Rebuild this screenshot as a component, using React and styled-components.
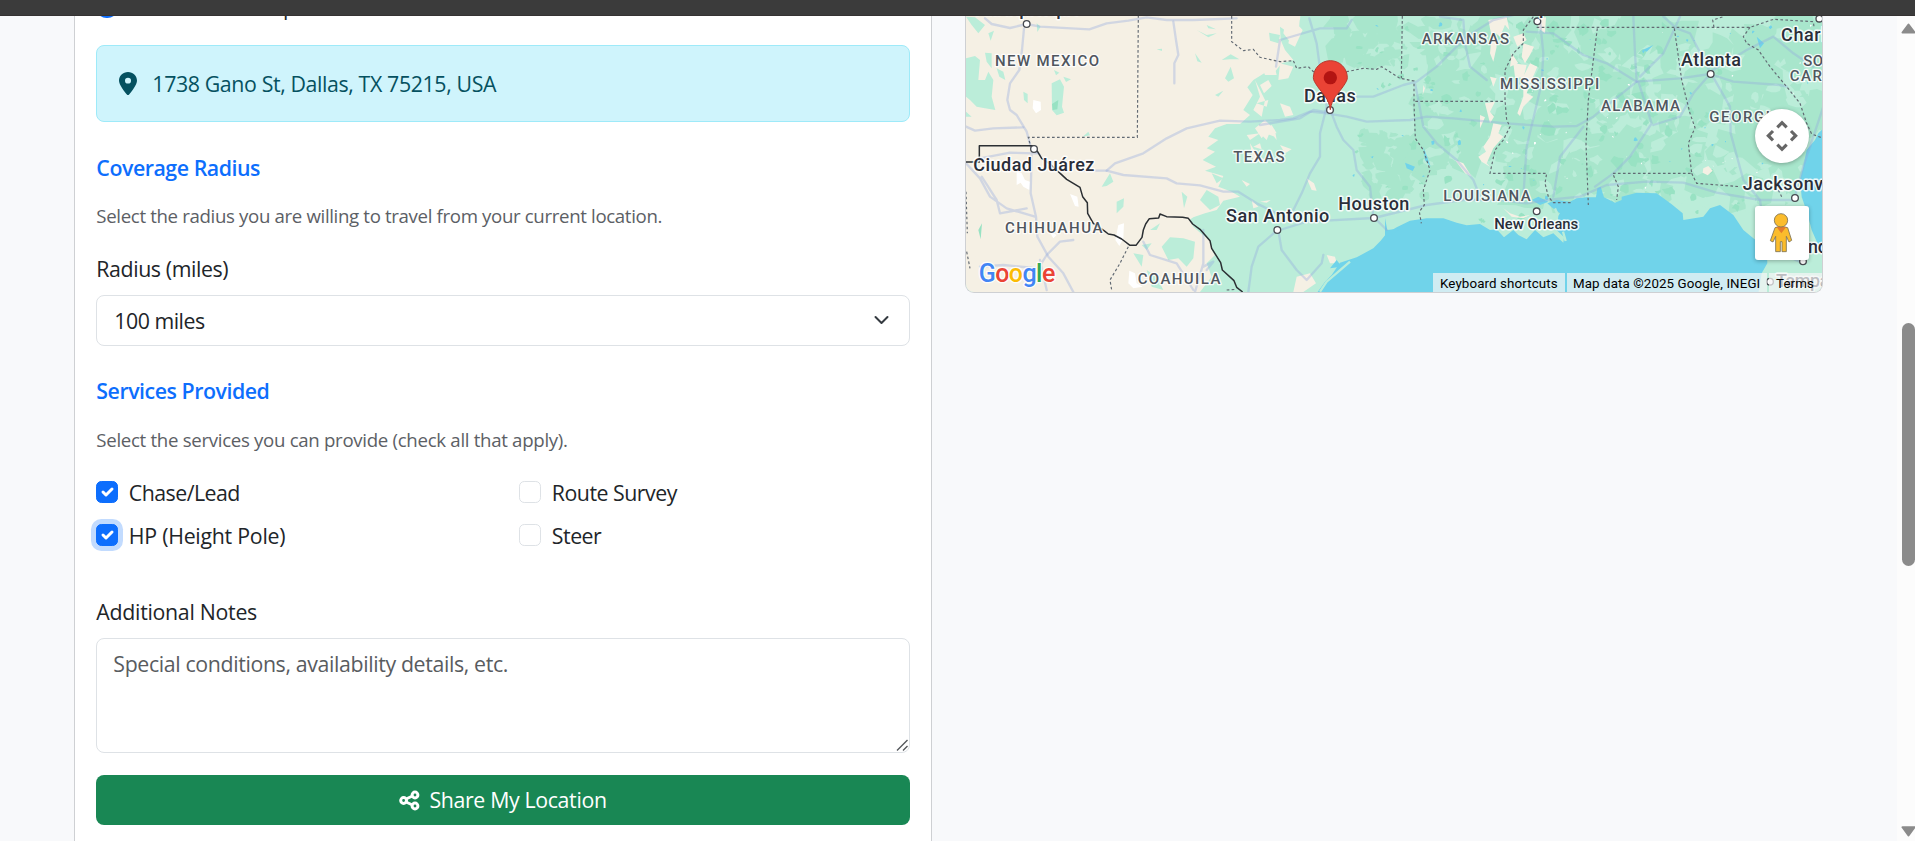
import React from 'react';
import styled, { createGlobalStyle, css } from 'styled-components';

const GlobalStyle = createGlobalStyle`
  *, *::before, *::after { box-sizing: border-box; }
  html, body, #root { height: 100%; }
  body {
    margin: 0;
    overflow: hidden;
    background: #f8f9fb;
    color: #212529;
    font-family: "Open Sans", "Noto Sans", sans-serif;
    font-size: 21.33px;
    line-height: 32px;
  }
`;

const tracking = css`
  letter-spacing: ${(p) => p.$track ?? -0.35}px;
  white-space: nowrap;
`;

const Shell = styled.div`
  display: flex;
  flex-direction: column;
  height: 100vh;
`;

const TopBar = styled.div`
  flex: none;
  height: 16px;
  background: #3b3b3b;
  border-bottom: 1px solid #353232;
`;

const Viewport = styled.div`
  flex: 1;
  min-height: 0;
  display: flex;
  overflow: hidden;
`;

const Content = styled.main`
  flex: 1;
  min-width: 0;
  display: flex;
  align-items: flex-start;
  gap: 33px;
  padding-left: 74px;
`;

const FormCard = styled.form`
  width: 858px;
  height: 900px;
  margin-top: -24px;
  padding: 0 21.33px;
  background: #fff;
  border: 1px solid #ced0d3;
  border-top: 0;
  display: flex;
  flex-direction: column;
`;

const OptionRow = styled.label`
  display: flex;
  align-items: flex-start;
  gap: 10.5px;
  height: 32px;
`;

const OptionText = styled.span`
  padding-top: 1px;
  ${tracking}
`;

const RadioText = styled.span`
  height: 32px;
  line-height: 30px;
  ${tracking}
`;

const Radio = styled.span`
  width: 21.33px;
  height: 21.33px;
  margin-top: 4.6px;
  border-radius: 50%;
  background: #0d6efd;
`;

const Alert = styled.div`
  display: flex;
  align-items: center;
  gap: 15px;
  height: 77px;
  margin-top: 21px;
  padding: 0 22px;
  color: #055160;
  background: #cff4fc;
  border: 1px solid #9eeaf9;
  border-radius: 8px;
  svg { width: 18px; height: 23px; }
`;

const AlertText = styled.span`
  ${tracking}
`;

const SectionTitle = styled.h6`
  margin: 32px 0 0;
  padding-top: ${(p) => p.$drop ?? 0}px;
  font-size: 21.33px;
  font-weight: 600;
  line-height: 25.6px;
  color: #0d6efd;
  ${tracking}
`;

const Hint = styled.p`
  margin: ${(p) => p.$top ?? 22}px 0 0;
  height: 28px;
  font-size: 18.67px;
  line-height: 28px;
  color: #5c6065;
  ${tracking}
`;

const FieldLabel = styled.label`
  margin-top: ${(p) => p.$top}px;
  height: 32px;
  ${tracking}
`;

const Select = styled.div`
  display: flex;
  align-items: center;
  justify-content: space-between;
  height: 51px;
  margin-top: 10.4px;
  padding: 0 17px;
  border: 1px solid #dee2e6;
  border-radius: 8px;
  svg { width: 21px; height: 16px; }
`;

const SelectValue = styled.span`
  padding-top: 1px;
  ${tracking}
`;

const ServiceGrid = styled.div`
  display: grid;
  grid-template-columns: 423px 1fr;
  row-gap: 11px;
  margin-top: 22.6px;
`;

const Checkbox = styled.span`
  flex: none;
  display: grid;
  place-items: center;
  width: 22px;
  height: 22px;
  margin-top: 5px;
  border: 1px solid ${(p) => (p.$checked ? '#0d6efd' : '#dee2e6')};
  border-radius: 5.3px;
  background: ${(p) => (p.$checked ? '#0d6efd' : '#fff')};
  box-shadow: ${(p) => (p.$focused ? '0 0 0 5px #c2dbfe' : 'none')};
  svg { width: 20px; height: 20px; }
`;

const NotesField = styled.div`
  position: relative;
  margin-top: 10.5px;
`;

const Notes = styled.textarea`
  display: block;
  width: 100%;
  height: 115px;
  padding: 9px 16px 7px;
  font: inherit;
  letter-spacing: -0.37px;
  color: #212529;
  background: #fff;
  border: 1px solid #dee2e6;
  border-radius: 8px;
  outline: none;
  resize: none;
  &::placeholder { color: #595c5f; opacity: 1; }
`;

const ResizeGrip = styled.svg`
  position: absolute;
  right: 2px;
  bottom: 2px;
`;

const SubmitButton = styled.button`
  display: flex;
  align-items: center;
  justify-content: center;
  gap: 9px;
  height: 50px;
  margin-top: 21.5px;
  padding: 1px 0 0;
  font: inherit;
  color: #fff;
  background: #198754;
  border: 0;
  border-radius: 8px;
  svg { width: 21px; height: 21px; }
  span { ${tracking} }
`;

const MapCard = styled.section`
  position: relative;
  width: 858px;
  height: 277px;
  overflow: hidden;
  border: 1px solid #ced0d3;
  border-top: 0;
  border-radius: 0 0 9px 9px;
  font-family: Roboto, sans-serif;
`;

const MapArt = styled.svg`
  display: block;
  width: 856px;
  height: 276px;
`;

const MapControls = styled.div`
  position: absolute;
  right: 13px;
  bottom: 32px;
  display: flex;
  flex-direction: column;
  gap: 43px;
`;

const MapControl = styled.button`
  display: grid;
  place-items: center;
  width: 54px;
  height: 54px;
  padding: 0;
  border: 0;
  border-radius: ${(p) => (p.$round ? '50%' : '3px')};
  background: #fff;
  box-shadow: 0 1px 4px rgba(0, 0, 0, 0.3);
`;

const Attribution = styled.div`
  position: absolute;
  right: 0;
  bottom: 0;
  display: flex;
  gap: 2px;
  height: 19px;
  font-size: 13.33px;
  line-height: 21px;
  color: #000;
`;

const AttributionItem = styled.span`
  width: ${(p) => p.$width}px;
  padding-left: ${(p) => p.$pad}px;
  background: rgba(245, 245, 245, 0.72);
  letter-spacing: ${(p) => p.$spacing}px;
  white-space: nowrap;
`;

const ScrollTrack = styled.div`
  flex: none;
  display: flex;
  flex-direction: column;
  align-items: flex-end;
  justify-content: space-between;
  width: 18px;
  padding: 7px 0 4px;
  background: #fcfcfc;
  svg { display: block; }
`;

const ScrollThumb = styled.div`
  width: 13px;
  height: 243px;
  margin-bottom: -29px;
  border-radius: 7px;
  background: #8b8b8b;
`;

const PinIcon = () => (
  <svg viewBox="0 0 384 512" preserveAspectRatio="none" fill="currentColor" fillRule="evenodd">
    <path d="M215.7 499.2C267 435 384 279.4 384 192 384 86 298 0 192 0S0 86 0 192c0 87.4 117 243 168.3 307.2 12.3 15.3 35.1 15.3 47.4 0zM192 128a64 64 0 1 1 0 128 64 64 0 1 1 0-128z" />
  </svg>
);

const ChevronIcon = () => (
  <svg viewBox="0 0 16 16" fill="none" stroke="#343a40" strokeWidth="2" strokeLinecap="round" strokeLinejoin="round">
    <path d="m2 5 6 6 6-6" />
  </svg>
);

const CheckIcon = () => (
  <svg viewBox="0 0 20 20" fill="none" stroke="#fff" strokeWidth="3" strokeLinecap="round" strokeLinejoin="round">
    <path d="m6 10 3 3 6-6" />
  </svg>
);

const ShareIcon = () => (
  <svg viewBox="0 0 21 21" fill="none" stroke="#fff" strokeWidth="3">
    <path d="M7 9 13.500 6M7 12l6.500 3" />
    <circle cx="4.600" cy="10.500" r="2.900" />
    <circle cx="16" cy="5" r="2.900" />
    <circle cx="16" cy="16" r="2.900" />
  </svg>
);

const CameraIcon = () => (
  <svg width="54" height="54" viewBox="0 0 162 162" fill="none" stroke="#666" strokeWidth="9.500">
    <path d="m67 55 14-14 14 14M67 107l14 14 14-14M54 66 40 80l14 14M108 66l14 14-14 14" />
  </svg>
);

const PegmanIcon = () => (
  <svg width="54" height="54" viewBox="0 0 162 162" strokeWidth="2.500" strokeLinejoin="round">
    <path d="M60 65q18-7 38 0l12 38-8 5-8-17v46H81v-30h-5v30H62V91l-8 17-8-4z" fill="#fbbc2c" stroke="#7a7157" />
    <path d="M64 62h30L79 82z" fill="#e57c2b" />
    <circle cx="78" cy="43" r="20" fill="#fbbc2c" stroke="#7a7157" />
  </svg>
);

const Arrow = ({ down }) => (
  <svg width="14" height="11" viewBox="0 0 14 11">
    <path d={down ? 'M1.500 1.200h12L7.500 9.500z' : 'M7.500 1.500 13.500 9.500h-12z'} fill="#8b8b8b" stroke="#8b8b8b" strokeWidth="2" strokeLinejoin="round" />
  </svg>
);

/* Repeatable random vegetation patches. */
const makePatches = (seed, count, [x0, y0, x1, y1], min, max) => {
  let s = seed;
  const rnd = () => {
    s = (s * 16807) % 2147483647;
    return s / 2147483647;
  };
  let d = '';
  for (let i = 0; i < count; i += 1) {
    const cx = x0 + rnd() * (x1 - x0);
    const cy = y0 + rnd() * (y1 - y0);
    const r = min + rnd() * (max - min);
    const stretch = 0.45 + rnd();
    const points = [];
    for (let k = 0; k < 9; k += 1) {
      const a = (k / 9) * Math.PI * 2;
      const q = r * (0.4 + rnd() * 0.8);
      points.push(`${(cx + Math.cos(a) * q).toFixed(0)} ${(cy + Math.sin(a) * q * stretch).toFixed(0)}`);
    }
    d += `M${points.join('L')}Z`;
  }
  return d;
};

const GREEN = '#bbedd9';
const MID = '#a8e6cc';
const DEEP = '#98e2c3';
const SAND = '#f5f0e4';
const WATER = '#70d3ea';

const patches = [
  [MID, makePatches(11, 40, [1130, 50, 1340, 200], 8, 40)],
  [MID, makePatches(23, 55, [1210, 400, 1410, 590], 8, 34)],
  [MID, makePatches(31, 80, [1370, 60, 1640, 500], 20, 80)],
  [MID, makePatches(47, 200, [1650, 60, 2590, 600], 20, 75)],
  [GREEN, makePatches(59, 95, [1400, 60, 2590, 620], 8, 34)],
  [DEEP, makePatches(71, 70, [1400, 60, 2300, 590], 4, 16)],
  [DEEP, makePatches(83, 36, [1620, 60, 2100, 590], 6, 24)],
  [DEEP, makePatches(97, 20, [1190, 60, 1400, 580], 4, 12)],
  [DEEP, makePatches(101, 30, [1550, 560, 2380, 690], 4, 14)],
  [WATER, makePatches(113, 45, [1180, 60, 2560, 600], 2, 6)],
  ['#fff', makePatches(127, 34, [1640, 60, 2560, 580], 1, 4)],
];

const StateLabel = styled.text`
  font: 500 ${(p) => p.$size ?? 45}px Roboto, sans-serif;
  fill: #50565e;
  stroke: rgba(255, 255, 255, 0.85);
  stroke-width: 8px;
  stroke-linejoin: round;
  paint-order: stroke;
`;

const CityLabel = styled(StateLabel)`
  font-size: ${(p) => p.$size ?? 54}px;
  fill: #2a2e39;
  stroke-width: 9px;
`;

const states = [
  ['NEW MEXICO', 105, 198, 312],
  ['CHIHUAHUA', 135, 700, 292],
  ['COAHUILA', 533, 851, 248],
  ['TEXAS', 820, 486, 154],
  ['ARKANSAS', 1385, 132, 262],
  ['MISSISSIPPI', 1620, 266, 298],
  ['LOUISIANA', 1450, 603, 262],
  ['ALABAMA', 1923, 333, 237],
  ['GEORGIA', 2248, 366, 217],
  ['SOUTH', 2530, 199, 150],
  ['CAROLINA', 2489, 243, 250],
];

const cities = [
  ['Albuquerque', 48, 45, 314],
  ['Ciudad Juárez', 40, 512, 363],
  ['San Antonio', 798, 665, 310],
  ['Dallas', 1032, 305, 155],
  ['Houston', 1135, 629, 213],
  ['Memphis', 1624, 43, 205],
  ['New Orleans', 1603, 686, 252, 45],
  ['Atlanta', 2163, 198, 180],
  ['Charlotte', 2463, 122, 238],
  ['Jacksonville', 2348, 570, 318],
  ['Orlando', 2448, 760, 186],
  ['Tampa', 2448, 862, 160],
];

const dots = [
  [200, 72], [222, 447], [952, 690], [1110, 330], [1242, 654], [1732, 64],
  [1730, 634], [2252, 222], [2578, 56], [2505, 594], [2529, 784], [2430, 845],
];

const logoLetters = [
  ['G', '#4285f4'], ['o', '#ea4335'], ['o', '#fbbc05'], ['g', '#4285f4'], ['l', '#34a853'], ['e', '#ea4335'],
];

const MapDrawing = () => (
  <MapArt viewBox="18 48 2568 828" preserveAspectRatio="none">
    <rect x="0" y="0" width="2600" height="900" fill={GREEN} />
    {/* dry western plains */}
    <path
      fill={SAND}
      d="M0 0H1025L1020 60 985 70 995 105 960 80 962 120 975 150 1000 180 965 190 945 215 915 218 880 240 862 262 878 285 850 330 870 345 840 372 800 372 765 385 745 410 775 420 740 445 765 455 728 480 768 500 735 512 790 528 775 560 815 575 840 590 790 602 770 630 735 640 700 652 688 660 700 680 722 700 750 722 755 750 780 790 790 815 820 845 845 876H0V545L40 590 75 600 100 620 110 640 130 665 150 720 190 735 200 760 160 790 110 800 100 840 60 876H0Z"
    />
    <path
      fill={GREEN}
      d="M18 175 45 168 60 180 55 240 75 240 85 215 100 240 95 290 106 330 75 325 50 320 30 300 18 290ZM275 250 300 238 312 260 306 320 312 338 290 346 276 330ZM18 50 45 52 75 75 55 100 35 75ZM75 158 95 160 95 205 80 185ZM110 205 130 215 136 240 118 230ZM190 275 203 282 203 310 192 300ZM310 230 333 238 318 246ZM282 210 298 218 288 226ZM85 100 102 92 92 122ZM230 70 242 80 232 96ZM368 410 385 395 390 406ZM425 560 450 520 460 545 440 558ZM470 605 492 595 490 620 470 640ZM590 148 606 146 606 153ZM710 90 740 105 770 100 745 112ZM740 75 768 88 745 85ZM705 160 725 188 712 184ZM785 180 812 163 838 178 810 178ZM795 235 812 200 822 235 805 245ZM765 285 790 272 775 290ZM605 740 630 712 670 715 705 725 700 775 680 800 655 775 625 780ZM545 735 575 730 560 750ZM720 600 740 570 775 590 780 615 750 630ZM755 520 790 535 770 550ZM665 575 682 590 672 625ZM570 690 600 670 590 690ZM770 760 740 790 755 830 720 876H850L800 800ZM560 810 590 830 610 870 575 860ZM0 320 35 350 18 350ZM927 98 960 105 955 130 930 122ZM520 760 550 765 545 800Z"
    />
    <path
      fill={SAND}
      d="M900 255 925 240 935 258 912 280ZM890 310 925 300 920 320ZM885 385 915 360 945 390 950 420 925 388 905 415ZM900 190 945 205 950 225 915 225ZM900 400 870 420 860 405ZM900 430 880 440 905 448ZM870 430 895 470 920 480 880 485ZM905 395 930 385 948 412ZM960 435 995 448 975 460ZM1040 535 1062 550 1070 572 1055 570ZM1100 765 1125 770 1130 790 1110 790ZM1010 830 1050 820 1068 850 1030 876H1000ZM900 605 932 600 920 608ZM1470 48 1500 60ZM1020 48 1015 110 1000 90 990 125 970 100 980 48ZM875 600 895 620 880 625ZM845 540 870 552 860 560ZM40 640 60 665 45 690ZM95 835 130 820 120 850ZM18 700 40 720 22 740ZM40 770 60 765 50 790ZM885 240 900 290 880 330 905 350 915 300 900 270ZM1000 60 1028 90 1005 140 985 130ZM960 190 1000 200 985 235 955 240ZM900 400 935 375 950 400 930 395 920 420ZM960 310 990 320 1000 345 975 350Z"
    />
    {/* salt flats */}
    <path fill="#fff" d="M220 300 242 305 243 330 228 340 218 325ZM170 515 185 520 195 540 210 545 208 570 190 560 182 548 170 555ZM330 582 352 590 356 620 345 618ZM475 675 492 670 490 715 478 738 466 720ZM508 812 525 820 530 850 548 860 520 865 505 850ZM265 690 290 705 280 715Z" />
    <path fill={DEEP} d="M276 312 295 300 292 328 278 330ZM55 690 66 670 62 718Z" />

    {patches.map(([fill, d], i) => (
      <path key={i} d={d} fill={fill} />
    ))}

    {/* Mississippi delta */}
    <path
      fill={SAND}
      d="M1585 60 1640 50 1648 90 1635 75 1620 110 1602 95 1610 140 1600 185 1590 160 1595 110ZM1735 55 1758 52 1755 100 1735 85ZM1660 110 1690 100 1700 120 1672 140ZM1690 130 1722 140 1710 165 1695 190 1685 170ZM1655 160 1675 190 1650 200ZM1660 190 1700 195 1690 235 1665 230ZM1590 230 1610 235 1600 260ZM1710 190 1732 200 1715 240 1700 280 1720 290 1690 320 1680 348 1672 340 1690 290 1690 230ZM1575 310 1605 305 1590 335 1602 350 1590 370ZM1560 345 1575 352 1560 385ZM1600 370 1625 375 1615 400 1630 410 1600 445 1580 490 1590 500 1565 485 1555 470 1578 455 1570 440 1590 410ZM1390 255 1395 265 1388 285ZM1630 625 1650 640 1680 650 1710 645 1690 655 1655 650ZM2230 505 2245 498 2258 512 2243 526 2228 518ZM1485 480 1510 490 1535 530 1515 520Z"
    />

    {/* Gulf and Atlantic */}
    <g fill={WATER}>
      <path d="M1070 880 1095 845 1115 825 1140 788 1190 772 1240 745 1262 722 1280 700 1310 682 1350 662 1400 655 1450 655 1490 668 1520 676 1560 672 1590 690 1610 688 1632 712 1660 690 1675 705 1700 718 1725 690 1750 712 1780 700 1810 728 1812 712 1790 690 1812 680 1790 655 1800 640 1775 622 1762 610 1790 600 1830 605 1850 595 1880 592 1908 592 1912 565 1922 560 1932 592 1965 608 1985 600 1985 590 2030 578 2090 580 2135 613 2168 640 2170 660 2230 650 2250 625 2280 615 2320 645 2350 690 2380 715 2420 745 2422 790 2405 820 2395 880Z" />
      <path d="M2600 375 2575 400 2565 420 2540 450 2530 500 2520 540 2525 590 2542 640 2555 690 2590 770Z" />
      <path d="M1275 655 1282 690 1325 685 1300 700 1275 712ZM1110 805 1130 780 1145 800ZM1335 488 1365 500 1358 513 1340 505ZM1715 600 1735 590 1765 605 1740 615ZM1390 440 1405 480 1412 500 1395 480ZM2048 150 2080 135 2095 120 2060 155ZM2390 110 2400 145 2412 130Z" />
    </g>
    <path d="M1785 625q12 20 2 45m22 25 8 28M1170 785l-70 60-20 30" stroke={GREEN} strokeWidth="7" fill="none" />

    {/* highways */}
    <g fill="none" stroke="rgba(148,168,222,.36)" strokeWidth="7" strokeLinejoin="round" strokeLinecap="round">
      <path d="M75 55 95 72 150 84 200 72 240 80 388 88 440 70 505 62 560 52 620 60 700 60 830 55" />
      <path d="M192 85 186 150 178 210 150 250 142 300 150 330 170 345 200 395 212 440 240 465" />
      <path d="M18 380 45 392 100 385 190 382M440 512 465 490 550 460 620 415 680 385 780 362 870 365 960 360 1000 355 1050 335 1100 340 1160 350 1220 365 1350 360 1400 350 1480 355 1640 370 1780 380 1850 378 1900 350 2030 245 2160 235 2250 222 2320 245 2460 255 2480 260" />
      <path d="M370 512 440 512 490 525 620 535 650 550 720 556 790 575 835 575 890 610 950 640" />
      <path d="M640 65 648 120 655 165 643 190V250M18 490 60 535 90 590 140 625 225 650M215 460 212 580 228 650 232 710 265 770 310 820 340 876M65 530 110 600 120 640 200 625M60 475 150 458 230 460" />
      <path d="M60 800 130 795 235 805 260 765 300 725 340 720M240 780 260 870M550 725 570 765 650 790 700 870M730 690V790L705 876M740 810 760 785 730 800" />
      <path d="M1175 60 1160 85 1080 85 960 120 948 200M1048 55 1070 130 1078 190 1100 320 1080 400 1080 470 1050 520 1025 580 1000 630M952 690 895 740 875 800 865 876M955 692 965 750 1010 810 1040 840 1085 790 1090 765" />
      <path d="M1115 340 1130 380 1150 420 1180 450 1190 510 1230 560 1240 650 1280 690M960 690 1040 665 1242 654 1400 615 1510 600 1620 600 1700 610 1760 600 1860 590 1940 555 2060 545 2170 548 2270 578 2400 600 2500 600" />
      <path d="M1120 330 1090 335 1060 330 1020 355 900 375M1120 290 1240 290 1330 255 1370 245 1430 200 1520 110 1600 60 1680 40M1365 250 1375 300 1390 380 1430 430 1490 480 1540 540 1560 590M1740 60 1750 160 1745 250 1700 440 1690 590M1700 95 1780 100 1870 165 1940 190 2030 245" />
      <path d="M1440 50 1510 60 1515 130 1530 200 1580 240M1870 380 1800 470 1780 590M2030 245 2025 160 2020 50M2035 245 2075 370 2010 470 1960 520 1905 560M2250 222 2200 280 2160 350 2080 375M2110 50 2150 85 2190 100 2250 215 2310 320 2312 400 2350 540 2400 600M2250 215 2360 150 2440 110M2440 110 2500 160 2560 200M2505 590 2530 500 2590 320M2160 50 2110 160 2040 230M2530 790 2420 740 2400 600" />
    </g>

    {/* state lines */}
    <g fill="none" stroke="#626a73" strokeWidth="3.500" strokeDasharray="8 7">
      <path d="M535 45 532 412H205L212 440M815 48V125L850 152 880 148 900 172 960 185 1000 182 1010 205 1045 200 1060 215 1160 215 1210 205 1250 208 1265 200 1320 235 1362 243V310L1366 415 1390 450 1410 510 1390 570 1393 615 1378 635 1384 670M1327 48 1324 235M1366 304H1630M505 740 480 790 450 840 455 870M800 870 830 868M18 575 22 700M20 755 30 805" />
      <path d="M1720 50 1690 90 1690 130 1660 160 1650 180 1635 210 1635 300 1640 360 1650 380 1630 420 1605 450 1590 520H1760L1755 550 1765 590 1780 608H1835M1730 82H2370L2440 58 2560 65 2562 80M1912 85 1885 300 1878 430 1885 615M2143 85 2165 240 2190 340 2205 383 2185 430 2195 520H1958L1975 560 1970 600M2195 520 2210 550 2340 560M2262 82 2258 60 2290 50M2370 82 2350 110 2360 130 2395 150 2430 200 2480 260 2520 310 2540 370 2555 402 2590 415M2455 570 2465 590" />
    </g>
    {/* US–Mexico border */}
    <path
      fill="none" stroke="#2b2f33" strokeWidth="4.500" strokeLinejoin="round"
      d="M18 486H58V437H222L245 475 270 492 295 515 320 538 360 562 368 590 382 608 383 640 400 670 432 692 445 702 462 705 485 717 510 736H528L546 712 550 690 557 672 568 656 596 654 600 642 620 650 668 652 685 655 698 672 720 688 750 722 755 745 782 788 787 810 822 842 830 862 848 876"
    />

    {dots.map(([x, y]) => (
      <circle key={`${x}-${y}`} cx={x} cy={y} r="10" fill="#fff" stroke="#474a50" strokeWidth="4" />
    ))}
    {states.map(([name, x, y, w]) => (
      <StateLabel key={name} x={x} y={y} textLength={w}>{name}</StateLabel>
    ))}
    {cities.map(([name, x, y, w, size]) => (
      <CityLabel key={name} x={x} y={y} textLength={w} $size={size}>{name}</CityLabel>
    ))}

    {/* location marker */}
    <path d="M1111 329C1106 294 1089 283 1073 260 1064 247 1060 240 1060 233A51 51 0 0 1 1162 233C1162 240 1158 247 1149 260 1133 283 1116 294 1111 329Z" fill="#ea4335" stroke="#b93a2e" strokeWidth="3" />
    <circle cx="1111" cy="233" r="20" fill="#b31412" />

    <StateLabel x="56" y="846" $size={75} textLength="230">
      {logoLetters.map(([letter, color], i) => (
        <tspan key={i} fill={color}>{letter}</tspan>
      ))}
    </StateLabel>
  </MapArt>
);

const services = [
  { name: 'Chase/Lead', checked: true, track: -0.53 },
  { name: 'Route Survey', track: -0.5 },
  { name: 'HP (Height Pole)', checked: true, focused: true, track: -0.26 },
  { name: 'Steer', track: -0.5 },
];

export default function App() {
  return (
    <Shell>
      <GlobalStyle />
      <TopBar />
      <Viewport>
        <Content>
          <FormCard>
            <OptionRow>
              <Radio />
              <RadioText $track={-1.35}>Address From Map</RadioText>
            </OptionRow>
            <Alert>
              <PinIcon />
              <AlertText $track={-0.38}>1738 Gano St, Dallas, TX 75215, USA</AlertText>
            </Alert>
            <SectionTitle $drop={0.7} $track={-0.46}>Coverage Radius</SectionTitle>
            <Hint $top={21.3}>Select the radius you are willing to travel from your current location.</Hint>
            <FieldLabel $top={23} $track={-0.4}>Radius (miles)</FieldLabel>
            <Select>
              <SelectValue $track={-0.5}>100 miles</SelectValue>
              <ChevronIcon />
            </Select>
            <SectionTitle $track={-0.46}>Services Provided</SectionTitle>
            <Hint $track={-0.31}>Select the services you can provide (check all that apply).</Hint>
            <ServiceGrid>
              {services.map((s) => (
                <OptionRow key={s.name}>
                  <Checkbox $checked={s.checked} $focused={s.focused}>{s.checked && <CheckIcon />}</Checkbox>
                  <OptionText $track={s.track}>{s.name}</OptionText>
                </OptionRow>
              ))}
            </ServiceGrid>
            <FieldLabel $top={44.5} $track={-0.29}>Additional Notes</FieldLabel>
            <NotesField>
              <Notes placeholder="Special conditions, availability details, etc." />
              <ResizeGrip width="12" height="12" viewBox="0 0 12 12" stroke="#55585c" strokeWidth="1.400">
                <path d="M1 11.500 11.500 1M7 11.500 11.500 7" />
              </ResizeGrip>
            </NotesField>
            <SubmitButton type="button">
              <ShareIcon />
              <span>Share My Location</span>
            </SubmitButton>
          </FormCard>
          <MapCard>
            <MapDrawing />
            <MapControls>
              <MapControl type="button" $round><CameraIcon /></MapControl>
              <MapControl type="button"><PegmanIcon /></MapControl>
            </MapControls>
            <Attribution>
              <AttributionItem $width={132} $pad={7} $spacing={0.12}>Keyboard shortcuts</AttributionItem>
              <AttributionItem $width={200} $pad={6} $spacing={0.1}>Map data ©2025 Google, INEGI</AttributionItem>
              <AttributionItem $width={53} $pad={7} $spacing={0.1}>Terms</AttributionItem>
            </Attribution>
          </MapCard>
        </Content>
        <ScrollTrack>
          <Arrow />
          <ScrollThumb />
          <Arrow down />
        </ScrollTrack>
      </Viewport>
    </Shell>
  );
}
